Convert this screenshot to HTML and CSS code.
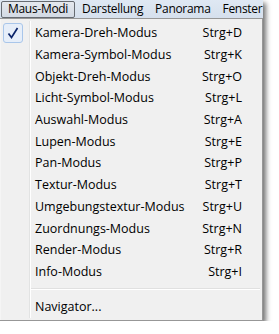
FILE: index.html
```html
<!DOCTYPE html>
<html lang="de">
<head>
<meta charset="utf-8">
<link rel="stylesheet" href="styles.css">
</head>
<body>
<div class="frame">
  <div class="menubar">
    <span class="top-item active">Maus-Modi</span>
    <span class="top-item">Darstellung</span>
    <span class="top-item">Panorama</span>
    <span class="top-item">Fenster</span>
  </div>
  <div class="panel">
    <div class="gutter-line"></div>
    <div class="row">
      <span class="check"><svg width="12" height="12" viewBox="0 0 12 12"><path d="M1.5 6.5 L4.5 10.5 L10.5 1" fill="none" stroke="#0a246a" stroke-width="1.7"/></svg></span>
      <span class="label">Kamera-Dreh-Modus</span><span class="key">Strg+D</span>
    </div>
    <div class="row"><span class="label">Kamera-Symbol-Modus</span><span class="key">Strg+K</span></div>
    <div class="row"><span class="label">Objekt-Dreh-Modus</span><span class="key">Strg+O</span></div>
    <div class="row"><span class="label">Licht-Symbol-Modus</span><span class="key">Strg+L</span></div>
    <div class="row"><span class="label">Auswahl-Modus</span><span class="key">Strg+A</span></div>
    <div class="row"><span class="label">Lupen-Modus</span><span class="key">Strg+E</span></div>
    <div class="row"><span class="label">Pan-Modus</span><span class="key">Strg+P</span></div>
    <div class="row"><span class="label">Textur-Modus</span><span class="key">Strg+T</span></div>
    <div class="row"><span class="label">Umgebungstextur-Modus</span><span class="key">Strg+U</span></div>
    <div class="row"><span class="label">Zuordnungs-Modus</span><span class="key">Strg+N</span></div>
    <div class="row"><span class="label">Render-Modus</span><span class="key">Strg+R</span></div>
    <div class="row"><span class="label">Info-Modus</span><span class="key">Strg+I</span></div>
    <div class="sep"></div>
    <div class="row"><span class="label">Navigator...</span><span class="key"></span></div>
  </div>
</div>
</body>
</html>
```
FILE: styles.css
```css
html, body {
  margin: 0;
  padding: 0;
  background: #ffffff;
}
body {
  font-family: "Open Sans", "Noto Sans", sans-serif;
  font-size: 12.5px;
  color: #000;
}
.frame {
  width: 263px;
  box-shadow: 3px 3px 5px rgba(0, 0, 0, 0.55);
}
.menubar {
  height: 18px;
  background: linear-gradient(#dfe8f3, #d6e0ed);
  display: flex;
  align-items: center;
  gap: 2px;
  overflow: hidden;
  white-space: nowrap;
  font-size: 12px;
  letter-spacing: -0.3px;
}
.top-item {
  padding: 0 4px;
  height: 15px;
  line-height: 14px;
  border: 1px solid transparent;
  border-radius: 2px;
}
.top-item.active {
  margin-left: 1px;
  padding: 0 6px;
  background: linear-gradient(#e4e8ee, #d3dae4);
  border-color: #666b72;
}
.panel {
  position: relative;
  background: #f0f0f0;
  border: 1px solid #979797;
  border-left: none;
  padding: 3px 0 3px 0;
  box-shadow: inset 1px 0 0 #f5f5f5;
}
.gutter-line {
  position: absolute;
  left: 29px;
  top: 2px;
  bottom: 2px;
  width: 1px;
  background: #e2e3e3;
  box-shadow: 1px 0 0 #ffffff;
}
.row {
  position: relative;
  height: 21.7px;
  display: flex;
  align-items: center;
  padding-left: 35px;
  padding-right: 20px;
}
.label {
  flex: 1;
}
.key {
  text-align: right;
}
.check {
  position: absolute;
  left: 3px;
  top: 1px;
  width: 18px;
  height: 18px;
  border: 1px solid #a9c6ea;
  border-radius: 3px;
  background: #e6eef9;
  display: flex;
  align-items: center;
  justify-content: center;
}
.sep {
  height: 13px;
  position: relative;
}
.sep::after {
  content: "";
  position: absolute;
  left: 31px;
  right: 2px;
  top: 6px;
  height: 1px;
  background: #e0e0e0;
  box-shadow: 0 1px 0 #ffffff;
}
```
